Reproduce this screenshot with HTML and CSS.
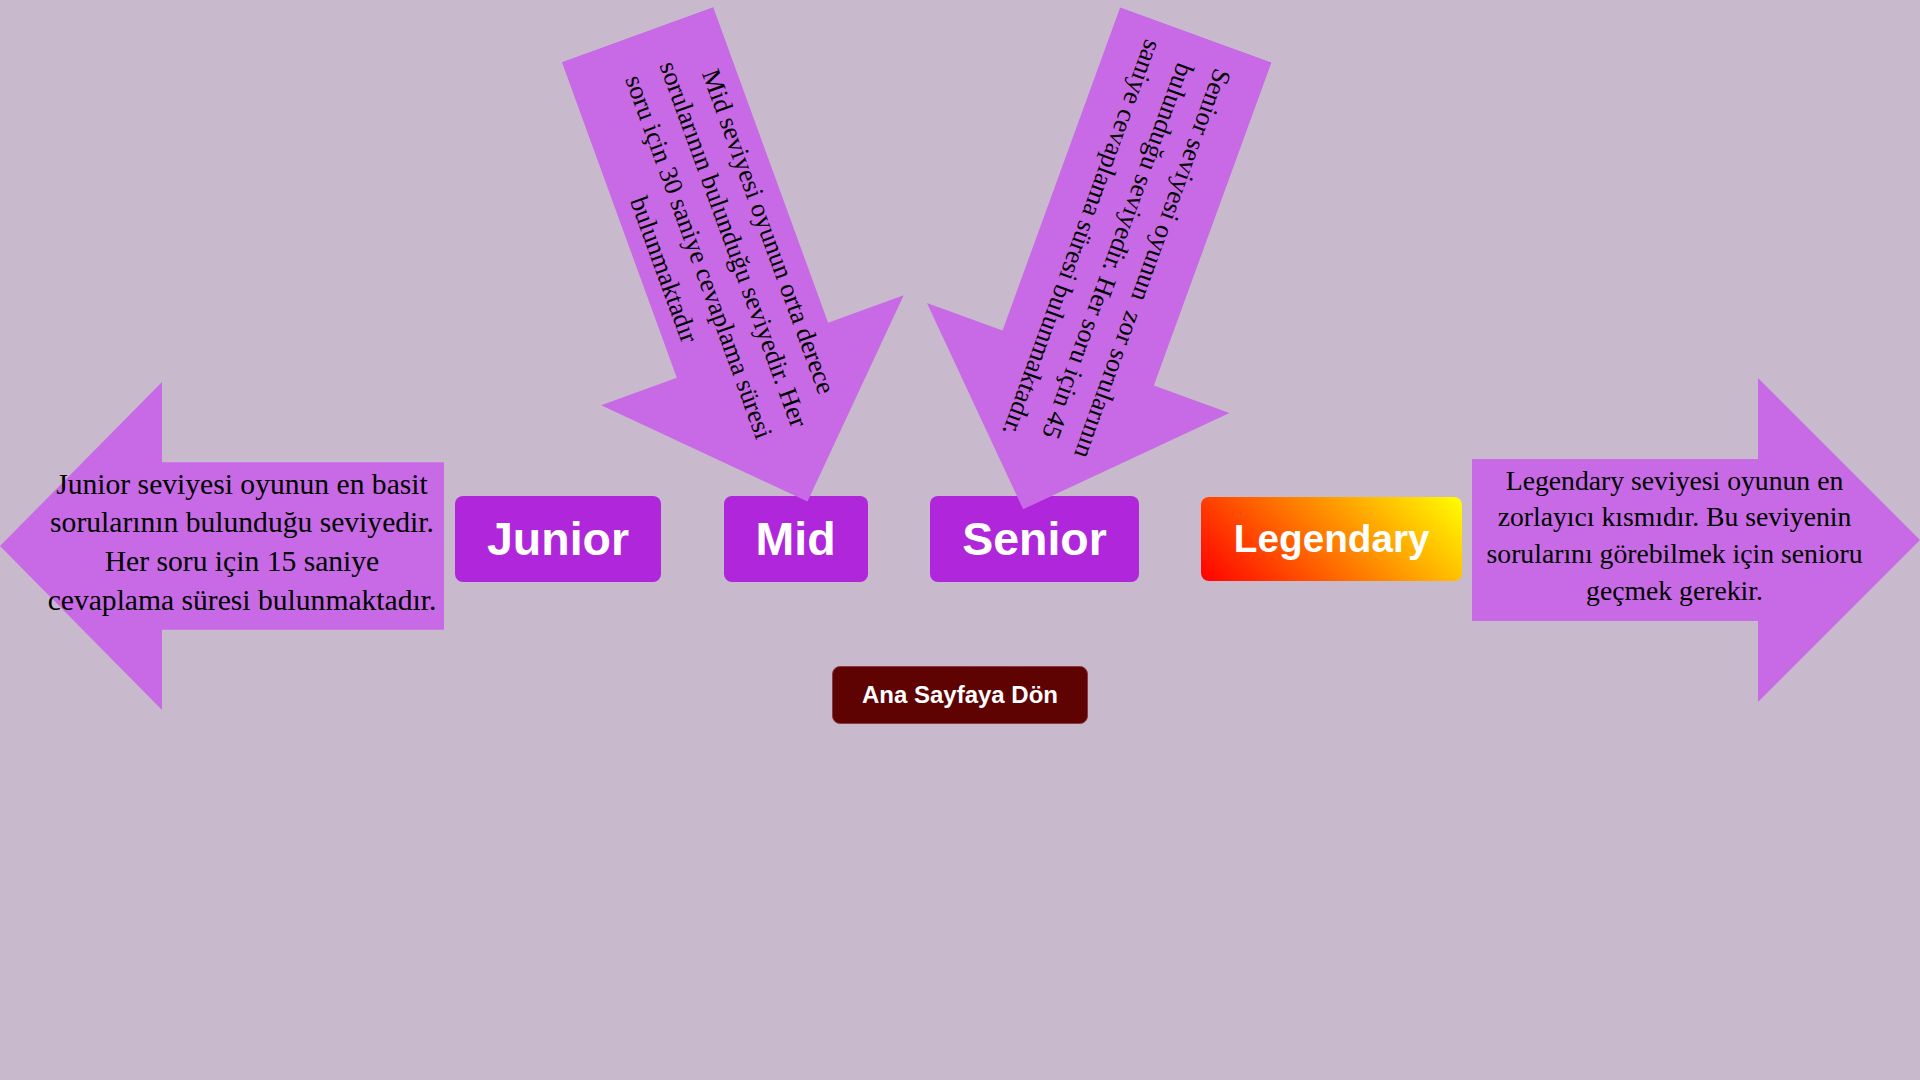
FILE: index.html
```html
<html>
	<head>
		<meta charset="UTF-8" />
		<meta name="viewport" content="width=device-width, initial-scale=1.0" />
		<title>Seviyeler</title>
		<link rel="stylesheet" href="styles.css">
	</head>
	<body>
		<div class="page">
			<div class="callout callout-mid">
				<p>Mid seviyesi oyunun orta derece sorularının bulunduğu seviyedir. Her soru için 30 saniye cevaplama süresi bulunmaktadır</p>
			</div>
			<div class="callout callout-senior">
				<p>Senior seviyesi oyunun&nbsp; zor sorularının bulunduğu seviyedir. Her soru için 45 saniye cevaplama süresi bulunmaktadır.</p>
			</div>

			<div class="levels">
				<div class="note note-left">
					<p>Junior seviyesi oyunun en basit sorularının bulunduğu seviyedir. Her soru için 15 saniye cevaplama süresi bulunmaktadır.</p>
				</div>
				<button type="button" class="level-btn">Junior</button>
				<button type="button" class="level-btn">Mid</button>
				<button type="button" class="level-btn">Senior</button>
				<button type="button" class="level-btn legendary">Legendary</button>
				<div class="note note-right">
					<p>Legendary seviyesi oyunun en zorlayıcı kısmıdır. Bu seviyenin sorularını görebilmek için senioru geçmek gerekir.</p>
				</div>
			</div>

			<div class="home-row">
				<button type="button" class="home-btn">Ana Sayfaya Dön</button>
			</div>
		</div>
	</body>
</html>
```

FILE: styles.css
```css
body {
	margin: 0;
	background-color: #c8b9cd;
	min-height: 100vh;
}
.page {
	position: relative;
	padding-top: 496px;
}

/* arrow notes */
.note,
.callout {
	display: flex;
	align-items: center;
	box-sizing: border-box;
	color: #000;
	font-family: "Liberation Serif", "Times New Roman", serif;
}
.note::before,
.callout::before {
	content: "";
	position: absolute;
	top: 0;
	left: 0;
	right: 0;
	bottom: 0;
	background-color: #c86ae6;
}
.note p,
.callout p {
	position: relative;
	margin: 0;
	text-align: center;
}
.note {
	position: relative;
}
.note p {
	margin-bottom: 8px;
}
.note-left {
	flex: none;
	width: 444px;
	height: 328px;
	margin-top: 15px;
	padding-left: 43px;
	font-size: 29.6px;
	line-height: 38.7px;
}
.note-left::before {
	clip-path: polygon(0 50%, 162px 0, 162px 24.5%, 100% 24.5%, 100% 75.5%, 162px 75.5%, 162px 100%);
}
.note-left p {
	width: 398px;
}
.note-right {
	flex: 1;
	height: 324px;
	margin-top: 3px;
	margin-left: 9.5px;
	padding-left: 5px;
	font-size: 27.7px;
	line-height: 36.7px;
}
.note-right::before {
	clip-path: polygon(0 25%, calc(100% - 162px) 25%, calc(100% - 162px) 0, 100% 50%, calc(100% - 162px) 100%, calc(100% - 162px) 75%, 0 75%);
}
.note-right p {
	width: 396px;
}

.callout {
	position: absolute;
	height: 322px;
	padding-left: 14px;
	font-size: 26.3px;
	line-height: 37.5px;
}
.callout::before {
	clip-path: polygon(0 25%, calc(100% - 161px) 25%, calc(100% - 161px) 0, 100% 50%, calc(100% - 161px) 100%, calc(100% - 161px) 75%, 0 75%);
}
.callout p {
	width: 432px;
}
.callout-mid {
	left: 473.5px;
	top: 107px;
	width: 497px;
	line-height: 37px;
	transform: rotate(70deg);
}
.callout-senior {
	left: 857px;
	top: 110.75px;
	width: 505px;
	transform: rotate(110deg);
}

/* level buttons */
.levels {
	display: flex;
	align-items: center;
	height: 85px;
}
.level-btn {
	flex: none;
	margin: 0 0 0 62.5px;
	padding: 16px 32px;
	border: none;
	border-radius: 8px;
	background-color: #b026da;
	color: #fff;
	font: bold 46.5px "Liberation Sans", Arial, sans-serif;
	cursor: pointer;
}
.note + .level-btn {
	margin-left: 11px;
}
.legendary {
	padding: 20px 32.5px;
	font-size: 38.7px;
	background: linear-gradient(45deg, #ff0000, #ffff00);
}

.home-row {
	display: flex;
	justify-content: center;
	margin-top: 85px;
}
.home-btn {
	padding: 14px 29px;
	border: 1px solid #8a3a44;
	border-radius: 8px;
	background-color: #5e0202;
	color: #fff;
	font: bold 24px "Liberation Sans", Arial, sans-serif;
	cursor: pointer;
}
```
